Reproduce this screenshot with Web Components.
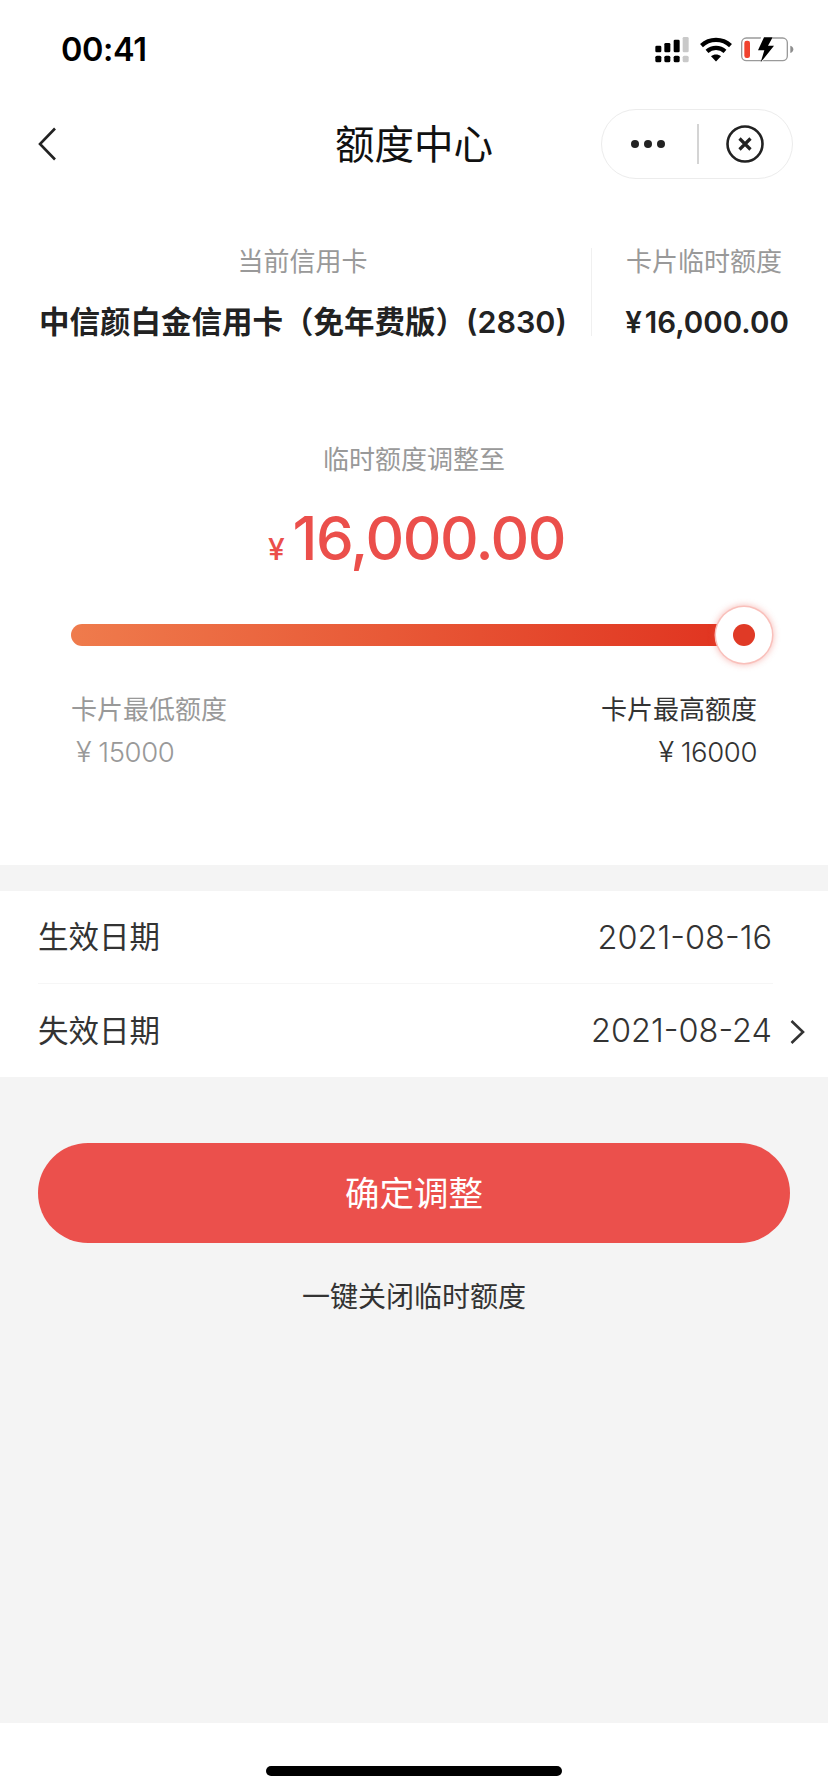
<!DOCTYPE html>
<html lang="zh-CN">
<head>
<meta charset="utf-8">
<title>额度中心</title>
<style>
  html, body { margin: 0; padding: 0; background: #f4f4f4; }
  body { font-family: Inter, "Noto Sans CJK SC", sans-serif; }
</style>
</head>
<body>
<limit-page>
  <status-bar slot="top" time="00:41"></status-bar>
  <nav-bar slot="top">额度中心</nav-bar>
  <card-summary slot="top" card="中信颜白金信用卡（免年费版）(2830)" amount="16,000.00"></card-summary>
  <limit-slider slot="top" amount="16,000.00" min="15000" max="16000"></limit-slider>
  <date-list>
    <date-row label="生效日期" value="2021-08-16"></date-row>
    <date-row label="失效日期" value="2021-08-24" arrow></date-row>
  </date-list>
  <action-button>确定调整</action-button>
  <text-link>一键关闭临时额度</text-link>
  <home-bar slot="bottom"></home-bar>
</limit-page>

<script>
// la pagina: parte blanca arriba, fondo gris y barra de inicio abajo
class LimitPage extends HTMLElement {
  constructor() {
    super();
    this.attachShadow({ mode: 'open' }).innerHTML = `<style>
      :host { display: flex; flex-direction: column; width: 828px; height: 1792px; background: #f4f4f4; overflow: hidden; }
      .top { background: #fff; }
      .middle { flex: 1; display: flex; flex-direction: column; padding-top: 26px; }
    </style>
    <div class="top"><slot name="top"></slot></div>
    <div class="middle"><slot></slot></div>
    <slot name="bottom"></slot>`;
  }
}

class StatusBar extends HTMLElement {
  constructor() {
    super();
    this.attachShadow({ mode: 'open' }).innerHTML = `<style>
      :host { display: flex; justify-content: space-between; align-items: flex-start; height: 109px; box-sizing: border-box; padding: 30px 34px 0 61px; }
      .time { font: 600 32.5px/40px Inter, sans-serif; color: #000; letter-spacing: -0.4px; }
      .icons { display: flex; align-items: flex-start; padding-top: 7px; }
      svg { display: block; }
      .wifi { margin-left: 11px; }
      .batt { margin-left: 9px; }
    </style>
    <span class="time"></span>
    <div class="icons">
      <svg width="34" height="26" viewBox="105 52 100 78">
        <g fill="#000">
          <rect x="105" y="78" width="18" height="20" rx="4"/><rect x="132" y="70" width="18" height="28" rx="4"/><rect x="160" y="60" width="18" height="38" rx="4"/>
          <rect x="105" y="108" width="18" height="20" rx="5"/><rect x="132" y="108" width="18" height="20" rx="5"/><rect x="160" y="108" width="18" height="20" rx="5"/>
        </g>
        <g fill="#c9c9c9"><rect x="187" y="52" width="18" height="46" rx="4"/><rect x="187" y="108" width="18" height="20" rx="5"/></g>
      </svg>
      <svg class="wifi" width="32" height="25" viewBox="0 0 32 25">
        <g fill="none" stroke="#000" stroke-width="4.2">
          <path d="M1.5 8.6C9.6 1 22.4 1 30.5 8.6"/>
          <path d="M7 14.4c5-4.6 13-4.6 18 0"/>
        </g>
        <path d="M11 19.2c2.8-2.4 7.2-2.4 10 0L16 24.6z" fill="#000"/>
      </svg>
      <svg class="batt" width="53" height="26" viewBox="365 52 159 78">
        <rect x="367" y="55" width="137" height="68" rx="14" fill="none" stroke="#9a9a9a" stroke-width="4"/>
        <rect x="375" y="63" width="17" height="52" rx="7" fill="#f0432f"/>
        <path d="M513 78c5 1 9 5 9 11s-4 10-9 11z" fill="#8e8e8e"/>
        <path d="M426 50h36l-12 24h20l-46 58 10-38h-20z" fill="#fff"/>
        <path d="M434 53h26l-14 25h18l-40 50 11-36h-19z" fill="#000"/>
      </svg>
    </div>`;
  }
  connectedCallback() {
    this.shadowRoot.querySelector('.time').textContent = this.getAttribute('time');
  }
}

class NavBar extends HTMLElement {
  constructor() {
    super();
    this.attachShadow({ mode: 'open' }).innerHTML = `<style>
      :host { display: flex; align-items: center; position: relative; height: 70px; padding: 0 35px 0 38px; }
      .back { display: block; }
      .title { text-align: center; font: 400 39.5px/70px "Noto Sans CJK SC", sans-serif; color: #111; position: absolute; left: 0; right: 0; top: -2px; }
      .capsule { margin-left: auto; position: relative; width: 192px; height: 70px; box-sizing: border-box; border: 1.5px solid #ececec; border-radius: 35px; display: flex; align-items: center; background: #fff; }
      .dots { display: flex; gap: 5px; margin-left: 29px; }
      .dots i { width: 8px; height: 8px; border-radius: 50%; background: #222; }
      .line { width: 1.5px; height: 40px; background: #d4d4d4; margin-left: 32px; }
      .close { display: block; margin-left: 27px; }
    </style>
    <svg class="back" width="19" height="34" viewBox="0 0 19 34"><path d="M17 1.5 2 17l15 15.5" fill="none" stroke="#222" stroke-width="2.6"/></svg>
    <div class="title"><slot></slot></div>
    <div class="capsule">
      <div class="dots"><i></i><i></i><i></i></div>
      <div class="line"></div>
      <svg class="close" width="38" height="38" viewBox="0 0 38 38"><circle cx="19" cy="19" r="17.5" fill="none" stroke="#222" stroke-width="2.6"/><path d="M13.5 13.5l11 11m0-11l-11 11" fill="none" stroke="#222" stroke-width="3.2"/></svg>
    </div>`;
  }
}

class CardSummary extends HTMLElement {
  constructor() {
    super();
    this.attachShadow({ mode: 'open' }).innerHTML = `<style>
      :host { display: flex; padding-top: 69px; font-family: Inter, "Noto Sans CJK SC", sans-serif; }
      .col { display: flex; flex-direction: column; gap: 32px; box-sizing: border-box; }
      .left { width: 592px; padding-left: 39px; border-right: 1px solid #f0f0f0; }
      .left .label { text-align: center; width: 527px; }
      .right { width: 236px; padding-right: 12px; align-items: center; }
      .label { font-size: 26px; line-height: 28px; color: #999; white-space: nowrap; }
      .value { font-size: 30.5px; line-height: 28px; font-weight: 600; color: #222; white-space: nowrap; }
      .right .value { margin-left: 6px; font-size: 29.5px; display: flex; gap: 3px; }
    </style>
    <div class="col left"><div class="label">当前信用卡</div><div class="value card"></div></div>
    <div class="col right"><div class="label">卡片临时额度</div><div class="value"><span>¥</span><span class="amt"></span></div></div>`;
  }
  connectedCallback() {
    this.shadowRoot.querySelector('.card').textContent = this.getAttribute('card');
    this.shadowRoot.querySelector('.amt').textContent = this.getAttribute('amount');
  }
}

class LimitSlider extends HTMLElement {
  constructor() {
    super();
    this.attachShadow({ mode: 'open' }).innerHTML = `<style>
      :host { display: block; padding: 109px 71px 98px; font-family: Inter, "Noto Sans CJK SC", sans-serif; }
      .head { text-align: center; font-size: 26px; line-height: 30px; color: #999; }
      .amount { display: flex; justify-content: center; align-items: baseline; gap: 8px; margin-top: 28px; padding-left: 5px; color: #eb4f4b; height: 70px; line-height: 70px; }
      .amount b { font-weight: 500; font-size: 60px; letter-spacing: -1.5px; }
      .amount span { font-size: 30px; font-weight: 500; }
      .slider { position: relative; height: 56px; margin-top: 34px; }
      .track { position: absolute; left: 0; right: 7px; top: 17px; height: 22px; border-radius: 11px 0 0 11px; background: linear-gradient(90deg, #ef7b4c, #e0321f); }
      .thumb { position: absolute; right: -15px; top: 0; width: 56px; height: 56px; border-radius: 50%; background: #fff; box-shadow: 0 0 0 1.5px #f9c0bb, 0 0 6px 2px rgba(235,80,70,.35); display: flex; align-items: center; justify-content: center; }
      .thumb i { width: 22px; height: 22px; border-radius: 50%; background: #e03a26; }
      .ends { display: flex; justify-content: space-between; margin-top: 32px; }
      .end { display: flex; flex-direction: column; gap: 12px; font-size: 26px; line-height: 30px; color: #999; }
      .end.on { color: #333; align-items: flex-end; }
      .num { font-size: 27.5px; font-weight: 300; letter-spacing: -0.4px; display: flex; align-items: baseline; gap: 7px; padding-left: 5px; }
      .num span:first-child { font-size: 29px; }
    </style>
    <div class="head">临时额度调整至</div>
    <div class="amount"><span>¥</span><b class="amt"></b></div>
    <div class="slider"><div class="track"></div><div class="thumb"><i></i></div></div>
    <div class="ends">
      <div class="end"><div>卡片最低额度</div><div class="num"><span>¥</span><span class="min"></span></div></div>
      <div class="end on"><div>卡片最高额度</div><div class="num"><span>¥</span><span class="max"></span></div></div>
    </div>`;
  }
  connectedCallback() {
    const s = this.shadowRoot;
    s.querySelector('.amt').textContent = this.getAttribute('amount');
    s.querySelector('.min').textContent = this.getAttribute('min');
    s.querySelector('.max').textContent = this.getAttribute('max');
  }
}

class DateList extends HTMLElement {
  constructor() {
    super();
    this.attachShadow({ mode: 'open' }).innerHTML = `<style>
      :host { display: block; background: #fff; }
      .list { display: flex; flex-direction: column; }
    </style>
    <div class="list"><slot></slot></div>`;
  }
}

class DateRow extends HTMLElement {
  constructor() {
    super();
    this.attachShadow({ mode: 'open' }).innerHTML = `<style>
      :host { display: block; padding-left: 38px; }
      .row { display: flex; align-items: center; justify-content: space-between; height: 92px; padding-right: 23px; font-family: Inter, "Noto Sans CJK SC", sans-serif; color: #333; }
      .rule { height: 1px; margin-right: 55px; background: #f6f6f6; }
      :host(:last-child) .rule { display: none; }
      :host(:last-child) .row { height: 93px; }
      .label { font-size: 30.5px; line-height: 40px; }
      .right { display: flex; align-items: center; }
      .value { font-size: 32.5px; font-weight: 350; margin-right: 33px; }
      svg { display: none; margin-left: 18px; }
      :host([arrow]) svg { display: block; margin-top: 2px; }
      :host([arrow]) .value { margin-right: 0; }
    </style>
    <div class="row"><span class="label"></span><span class="right"><span class="value"></span><svg width="15" height="24" viewBox="0 0 15 24"><path d="M1.5 1 13 12 1.5 23" fill="none" stroke="#333" stroke-width="2.6"/></svg></span></div>
    <div class="rule"></div>`;
  }
  connectedCallback() {
    this.shadowRoot.querySelector('.label').textContent = this.getAttribute('label');
    this.shadowRoot.querySelector('.value').textContent = this.getAttribute('value');
  }
}

class ActionButton extends HTMLElement {
  constructor() {
    super();
    this.attachShadow({ mode: 'open' }).innerHTML = `<style>
      :host { display: flex; justify-content: center; height: 100px; margin: 66px 38px 0; border-radius: 50px; background: #eb504c; color: #fff; font: 400 34.5px/96px "Noto Sans CJK SC", sans-serif; }
    </style>
    <slot></slot>`;
  }
}

class TextLink extends HTMLElement {
  constructor() {
    super();
    this.attachShadow({ mode: 'open' }).innerHTML = `<style>
      :host { display: block; margin-top: 32px; text-align: center; color: #333; font: 400 28px/40px "Noto Sans CJK SC", sans-serif; }
    </style>
    <slot></slot>`;
  }
}

class HomeBar extends HTMLElement {
  constructor() {
    super();
    this.attachShadow({ mode: 'open' }).innerHTML = `<style>
      :host { display: flex; justify-content: center; height: 69px; box-sizing: border-box; padding-top: 43px; background: #fff; }
      i { display: block; width: 296px; height: 10px; border-radius: 5px; background: #000; }
    </style>
    <i></i>`;
  }
}

customElements.define('limit-page', LimitPage);
customElements.define('status-bar', StatusBar);
customElements.define('nav-bar', NavBar);
customElements.define('card-summary', CardSummary);
customElements.define('limit-slider', LimitSlider);
customElements.define('date-list', DateList);
customElements.define('date-row', DateRow);
customElements.define('action-button', ActionButton);
customElements.define('text-link', TextLink);
customElements.define('home-bar', HomeBar);
</script>
</body>
</html>
